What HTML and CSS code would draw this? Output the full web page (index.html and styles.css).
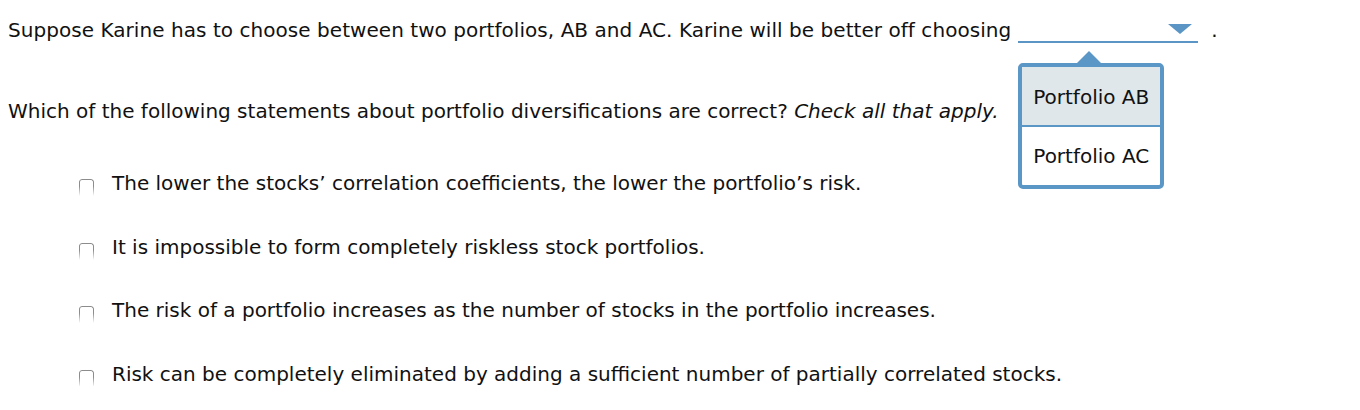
FILE: index.html
```html
<!DOCTYPE html>
<html>
<head>
<meta charset="utf-8">
<link rel="stylesheet" href="styles.css">
</head>
<body>
<div class="page">
  <div class="q1">
    <span class="q1text">Suppose Karine has to choose between two portfolios, AB and AC. Karine will be better off choosing</span>
    <span class="select">
      <span class="caret"></span>
      <div class="popup">
        <span class="pointer"></span>
        <div class="opt sel">Portfolio AB</div>
        <div class="opt">Portfolio AC</div>
      </div>
    </span>
    <span class="dot">.</span>
  </div>
  <div class="q2">Which of the following statements about portfolio diversifications are correct? <em>Check all that apply.</em></div>
  <ul class="choices">
    <li><span class="box"></span><span>The lower the stocks’ correlation coefficients, the lower the portfolio’s risk.</span></li>
    <li><span class="box"></span><span>It is impossible to form completely riskless stock portfolios.</span></li>
    <li><span class="box"></span><span>The risk of a portfolio increases as the number of stocks in the portfolio increases.</span></li>
    <li><span class="box"></span><span>Risk can be completely eliminated by adding a sufficient number of partially correlated stocks.</span></li>
  </ul>
</div>
</body>
</html>
```
FILE: styles.css
```css
html, body { margin: 0; padding: 0; background: #fff; }
body {
  font-family: "DejaVu Sans", Verdana, sans-serif;
  font-size: 20px;
  line-height: 24px;
  color: #111;
}
.page { padding: 17px 0 0 8px; }
.q1 {
  display: flex;
  align-items: flex-start;
  white-space: nowrap;
}
.q1text { letter-spacing: 0.05px; padding-top: 1px; }
.dot { padding-top: 1px; }
.select {
  position: relative;
  display: inline-block;
  width: 180px;
  height: 24px;
  margin-left: 7px;
  border-bottom: 2px solid #5b95c5;
}
.caret {
  position: absolute;
  right: 6px;
  top: 7px;
  width: 0; height: 0;
  border-left: 12px solid transparent;
  border-right: 12px solid transparent;
  border-top: 10px solid #5b95c5;
}
.dot { margin-left: 13px; }
.popup {
  position: absolute;
  left: 0;
  top: 46px;
  width: 138px;
  border: 4px solid #5a96c6;
  border-radius: 5px;
  background: #fff;
}
.pointer {
  position: absolute;
  left: 55px;
  top: -16px;
  width: 0; height: 0;
  border-left: 12px solid transparent;
  border-right: 12px solid transparent;
  border-bottom: 12px solid #5a96c6;
}
.opt {
  height: 58px;
  line-height: 58px;
  text-align: center;
}
.opt.sel {
  background: #dfe7ea;
  border-bottom: 2px solid #5a96c6;
  line-height: 60px;
}
.q2 { margin-top: 56px; }
.choices {
  list-style: none;
  margin: 48px 0 0 0;
  padding: 0 0 0 71px;
  display: flex;
  flex-direction: column;
  gap: 39.7px;
}
.choices li {
  display: flex;
  align-items: flex-start;
  height: 24px;
}
.box {
  flex: none;
  box-sizing: border-box;
  width: 15px;
  height: 18px;
  margin-top: 8px;
  margin-right: 18px;
  border: 1px solid #8c8c8c;
  border-bottom: none;
  border-radius: 3px 3px 0 0;
  -webkit-mask-image: linear-gradient(#000 40%, transparent 95%);
  mask-image: linear-gradient(#000 40%, transparent 95%);
}
```
